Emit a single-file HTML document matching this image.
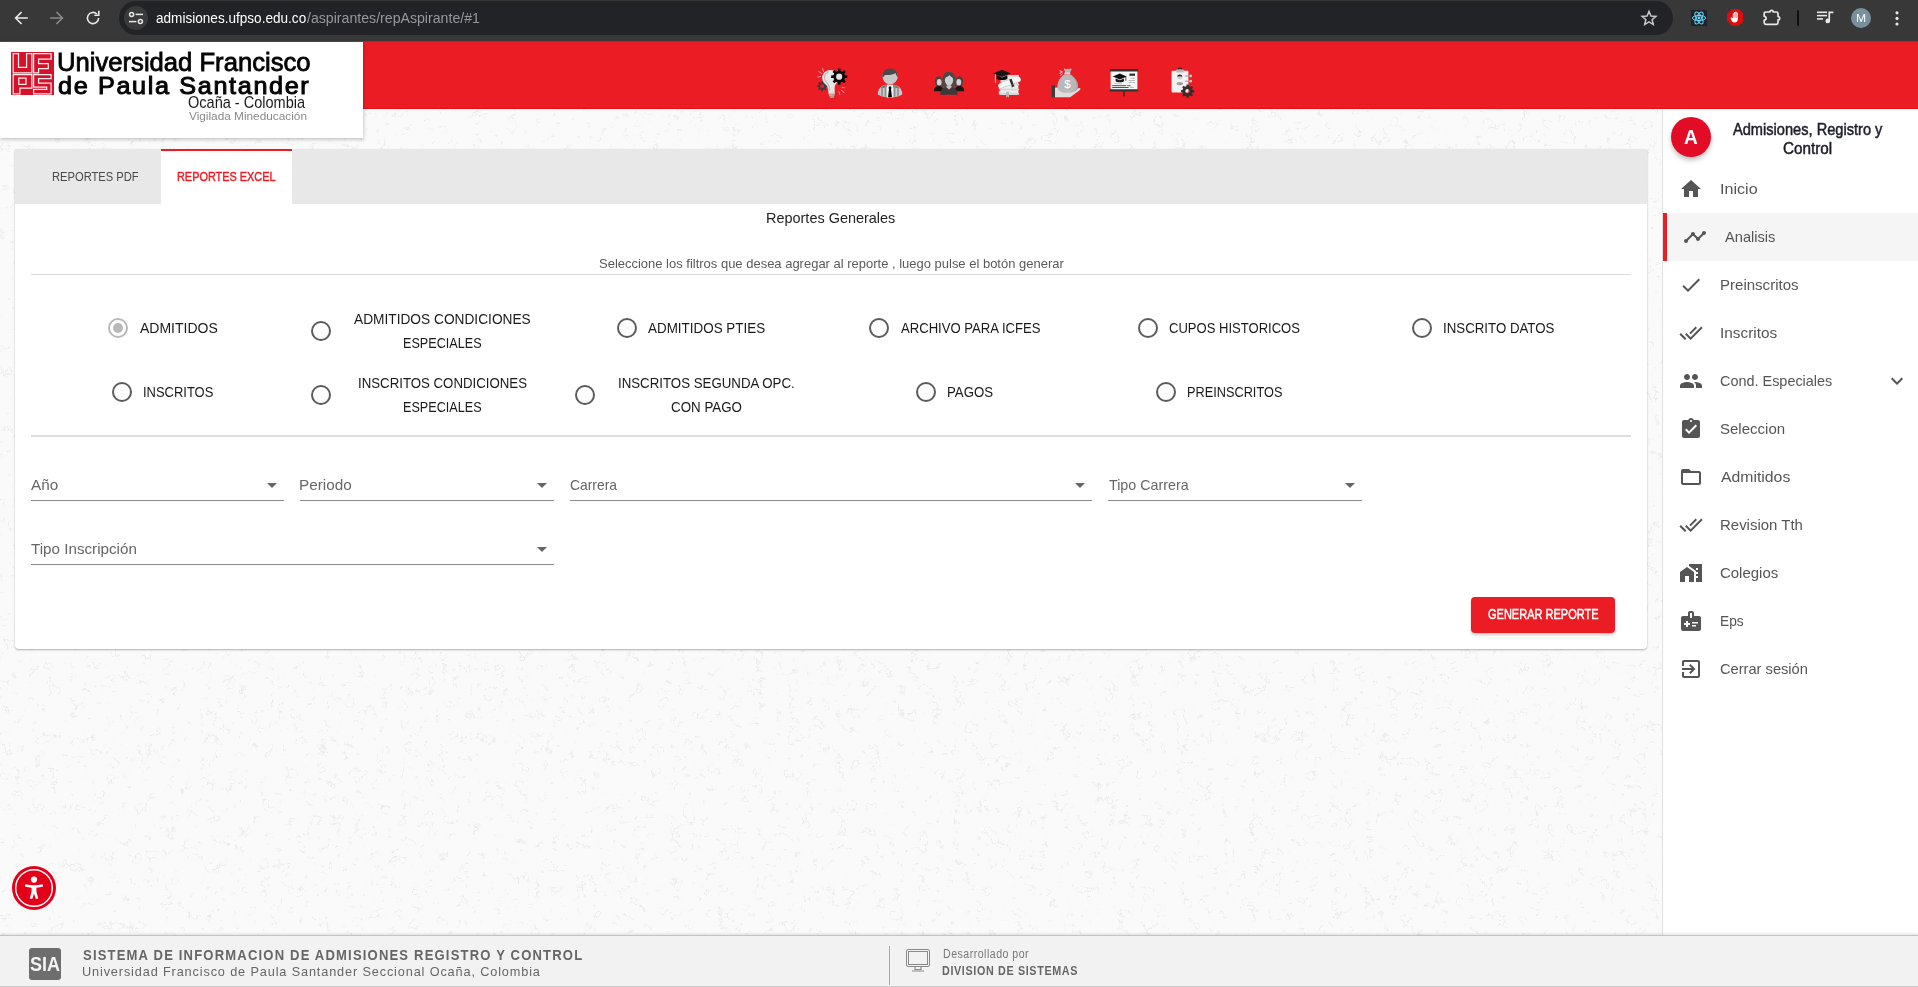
<!DOCTYPE html>
<html lang="es">
<head>
<meta charset="utf-8">
<title>Admisiones UFPSO - Reportes</title>
<style>
*{box-sizing:border-box;margin:0;padding:0}
html,body{width:1918px;height:987px;overflow:hidden}
body{position:relative;background:#fafafa;font-family:"Liberation Sans",sans-serif;color:#222}
.abs{position:absolute}
.t{position:absolute;white-space:nowrap;line-height:1;transform-origin:0 50%}
/* ---------- browser chrome ---------- */
#chrome{position:absolute;left:0;top:0;width:1918px;height:42px;background:#383838;border-bottom:1px solid #4c5150}
#omni{position:absolute;left:119px;top:1px;width:1554px;height:34px;border-radius:17px;background:#222326}
#omni .site{position:absolute;left:5px;top:5px;width:24px;height:24px;border-radius:12px;background:#3a3a3a}
/* ---------- page header ---------- */
#redbar{position:absolute;left:0;top:42px;width:1918px;height:67px;background:#ec1c24;border-bottom:1px solid #e80d14}
#logobox{position:absolute;left:0;top:42px;width:363px;height:96px;background:#fff;box-shadow:0 1px 4px rgba(0,0,0,.28)}
/* ---------- sidebar ---------- */
#side{position:absolute;left:1662px;top:109px;width:256px;height:826px;background:#fff;border-left:1px solid #e0e0e0}
#avatar{position:absolute;left:8px;top:8px;width:40px;height:40px;border-radius:50%;background:#e30c26;box-shadow:0 3px 5px rgba(0,0,0,.25)}
.nav{position:absolute;left:0;width:255px;height:48px}
.nav.act{background:#f5f5f5;border-left:4px solid #ec1c24}
.nav svg{position:absolute;top:12px;width:24px;height:24px;fill:#555}
/* ---------- card ---------- */
#card{position:absolute;left:15px;top:149px;width:1632px;height:500px;background:#fff;border-radius:0 0 4px 4px;box-shadow:0 1px 2px rgba(0,0,0,.3)}
#tabs{position:absolute;left:0;top:0;width:1632px;height:55px;background:#e8e8e8}
#tabact{position:absolute;left:146px;top:0;width:131px;height:55px;background:#fff;border-top:2px solid #ec1c24}
.hr{position:absolute;left:16px;width:1600px;height:1px;background:#dadada}
.radio{position:absolute;width:20px;height:20px;border-radius:50%;border:2px solid #5c5c5c;background:#fff}
.radio.on{border-color:#b8b8b8}
.radio.on:after{content:"";position:absolute;left:3px;top:3px;width:10px;height:10px;border-radius:50%;background:#b8b8b8}
.sel{position:absolute;height:34px;border-bottom:1px solid #8c8c8c}
.sel i{position:absolute;right:7px;top:16px;width:0;height:0;border-left:5px solid transparent;border-right:5px solid transparent;border-top:5px solid #666}
#btn{position:absolute;left:1456px;top:448px;width:144px;height:36px;border-radius:4px;background:#ec1c24;box-shadow:0 2px 3px rgba(0,0,0,.22)}
/* ---------- accessibility fab ---------- */
#a11y{position:absolute;left:12px;top:866px;width:44px;height:44px;border-radius:50%;background:#e2001a}
/* ---------- footer ---------- */
#foot{position:absolute;left:0;top:935px;width:1918px;height:52px;background:#f2f2f2;border-top:1px solid #c4c4c4;border-bottom:1px solid #cdcdcd;box-shadow:0 -1px 3px rgba(0,0,0,.12)}
</style>
</head>
<body>

<!-- ================= BACKGROUND TEXTURE ================= -->
<svg id="texture" class="abs" style="left:0;top:109px" width="1662" height="826"><filter id="tx" x="0" y="0" width="100%" height="100%" color-interpolation-filters="sRGB"><feTurbulence type="fractalNoise" baseFrequency=".085" numOctaves="4" seed="5" result="n"/><feColorMatrix in="n" values="0 0 0 0 0  0 0 0 0 0  0 0 0 0 0  1 0 0 0 0"/><feComponentTransfer result="veins"><feFuncA type="table" tableValues="0 0 0 0 0 0 0 0 0 0 0 0 .15 .9 .15 0 0 0 0 0 0 0 0 0 0 0 0 0 0 0 0 0 0"/></feComponentTransfer><feColorMatrix in="n" values="0 0 0 0 0  0 0 0 0 0  0 0 0 0 0  0 1 0 0 0"/><feComponentTransfer result="mask"><feFuncA type="table" tableValues="0 0 0 0 0 0 0 0 0 0 .5 1 1 1 1 1 1 1 1 1"/></feComponentTransfer><feComposite in="veins" in2="mask" operator="in"/></filter><rect width="1662" height="826" filter="url(#tx)" opacity=".07"/></svg>

<!-- ================= BROWSER CHROME ================= -->
<div id="chrome">
<div id="omni"><div class="site"></div></div>
<svg class="abs" style="left:13px;top:10px" width="16" height="16" viewBox="0 0 16 16" fill="none" stroke="#e8e8e8" stroke-width="1.6" stroke-linecap="square"><path d="M14 8H3M8 2.6L2.6 8 8 13.4"/></svg>
<svg class="abs" style="left:49px;top:10px" width="16" height="16" viewBox="0 0 16 16" fill="none" stroke="#8b8b8b" stroke-width="1.6" stroke-linecap="square"><path d="M2 8h11M8 2.6L13.4 8 8 13.4"/></svg>
<svg class="abs" style="left:85px;top:10px" width="16" height="16" viewBox="0 0 16 16" fill="none" stroke="#e8e8e8" stroke-width="1.6"><path d="M13.6 8a5.6 5.6 0 1 1-1.7-4"/><path d="M13.8 1.6v3.6h-3.6" stroke-linecap="square"/></svg>
<svg class="abs" style="left:128px;top:10px" width="16" height="16" viewBox="0 0 16 16" fill="none" stroke="#e8e8e8" stroke-width="1.5"><circle cx="3.6" cy="4.4" r="2"/><path d="M7.6 4.4H15"/><circle cx="12.4" cy="11.6" r="2"/><path d="M1 11.6h7.4"/></svg>
<span class="t" style="left:156.40px;top:11.00px;font-size:14.00px;color:#ffffff;transform:scaleX(0.9698);">admisiones.ufpso.edu.co</span>
<span class="t" style="left:307.40px;top:11.00px;font-size:14.00px;color:#94989d;transform:scaleX(1.0098);">/aspirantes/repAspirante/#1</span>
<svg class="abs" style="left:1640px;top:9px" width="18" height="18" viewBox="0 0 24 24" fill="none" stroke="#c7c7c7" stroke-width="2" stroke-linejoin="miter"><path d="M12 3.2l2.6 6.1 6.6.6-5 4.3 1.5 6.5L12 17.2l-5.7 3.5 1.5-6.5-5-4.3 6.6-.6z"/></svg>
<svg class="abs" style="left:1691px;top:10px" width="16" height="16" viewBox="0 0 16 16"><rect width="16" height="16" fill="#20232a"/><g fill="none" stroke="#61dafb" stroke-width="1"><ellipse cx="8" cy="8" rx="6.6" ry="2.6"/><ellipse cx="8" cy="8" rx="6.6" ry="2.6" transform="rotate(60 8 8)"/><ellipse cx="8" cy="8" rx="6.6" ry="2.6" transform="rotate(120 8 8)"/></g><circle cx="8" cy="8" r="1.4" fill="#61dafb"/></svg>
<svg class="abs" style="left:1726.600px;top:9.400px" width="16.800" height="16.800" viewBox="0 0 18 18"><path d="M5.300 0h7.400L18 5.300v7.400L12.700 18H5.300L0 12.700V5.300z" fill="#e00c0c"/><path d="M6.200 10V5.400c0-1 1.300-1 1.300 0V3.900c0-1 1.400-1 1.400 0v-.5c0-1 1.400-1 1.400 0V4.400c0-1 1.300-1 1.300 0v6.400c0 2.300-1.200 3.800-3.300 3.800-1.700 0-2.600-.8-3.400-2.300L4 10.200c-.5-1 .8-1.600 1.400-.7z" fill="#fff"/><g stroke="#e00c0c" stroke-width=".45"><path d="M7.500 5.400v4M8.900 4v5.400M10.300 4.400v5"/></g></svg>
<svg class="abs" style="left:1762px;top:8px" width="20" height="18" viewBox="0 0 20 18" fill="none" stroke="#e8e8e8" stroke-width="1.700" stroke-linejoin="round"><path d="M3.800 4H7.900a1.700 1.700 0 0 1 3.400 0H14.400a1.600 1.600 0 0 1 1.600 1.600V8.500a1.700 1.700 0 0 1 0 3.400V14.800a1.600 1.600 0 0 1-1.600 1.600H3.800a1.600 1.600 0 0 1-1.600-1.600V12.100a1.900 1.900 0 0 0 0-3.800V5.600a1.600 1.600 0 0 1 1.600-1.600Z"/></svg>
<div class="abs" style="left:1797px;top:10px;width:2px;height:16px;background:#101010;border-radius:1px"></div>
<svg class="abs" style="left:1817px;top:11px" width="17" height="13" viewBox="0 0 17 13" fill="#e8e8e8"><rect x="0" y="0.500" width="10" height="1.600"/><rect x="0" y="3.800" width="10" height="1.600"/><rect x="0" y="7.100" width="6" height="1.600"/><path d="M11.400.5h5v1.800h-3.300v7.600a2.300 2.300 0 1 1-1.700-2.200z"/></svg>
<div class="abs" style="left:1851px;top:8px;width:20px;height:20px;border-radius:50%;background:#78909c"></div>
<span class="t" style="left:1856.30px;top:13.00px;font-size:11.34px;color:#ffffff;transform:scaleX(1.0778);">M</span>
<svg class="abs" style="left:1895px;top:11px" width="4" height="15" viewBox="0 0 4 15" fill="#e8e8e8"><circle cx="2" cy="1.800" r="1.600"/><circle cx="2" cy="7.400" r="1.600"/><circle cx="2" cy="13" r="1.600"/></svg>
</div>

<!-- ================= HEADER ================= -->
<div id="redbar">
<svg class="abs" style="left:816px;top:25px" width="32" height="32" viewBox="0 0 32 32"><g stroke="#c9a9aa" stroke-width="1.100" stroke-linecap="round" opacity=".8"><path d="M2.600 4.400l3 2M6.600 1.600l1 3M1.600 10l3.200-.6M26.200 20.400l2.600.3M25.600 23.400l2.400 2.200M23 24.600l.8 3"/></g><path fill-rule="evenodd" fill="#3a3a3a" d="M11.39 18.29L11.39 19.91L9.85 19.96L9.40 21.03L10.46 22.16L9.31 23.31L8.18 22.25L7.11 22.70L7.06 24.24L5.44 24.24L5.39 22.70L4.32 22.25L3.19 23.31L2.04 22.16L3.10 21.03L2.65 19.96L1.11 19.91L1.11 18.29L2.65 18.24L3.10 17.17L2.04 16.04L3.19 14.89L4.32 15.95L5.39 15.50L5.44 13.96L7.06 13.96L7.11 15.50L8.18 15.95L9.31 14.89L10.46 16.04L9.40 17.17L9.85 18.24ZM4.35 19.10a1.90 1.90 0 1 0 3.80 0a1.90 1.90 0 1 0 -3.80 0Z"/><g transform="translate(-.6 .3) rotate(-5 15 16)"><path d="M15.400 2.600c-4.700 0-8.100 3.500-8.100 7.800 0 3.200 1.800 5.100 3.300 7 .9 1.200 1.400 2.400 1.500 4.400l.2 4.400h6.200l.2-4.400c.1-2 .6-3.200 1.500-4.400 1.500-1.900 3.300-3.800 3.300-7 0-4.300-3.400-7.800-8.100-7.800z" fill="#e6e6e6"/><path d="M13.600 4.600c-3 1.300-4.600 4.400-3.600 7.700.7 2.400 2.600 3.700 3.300 6.200.4 1.400.5 3 .5 5" fill="none" stroke="#b9b9b9" stroke-width="1.100"/><rect x="12.400" y="25.600" width="6" height="1.700" fill="#c9cccc"/><rect x="12.600" y="27.300" width="5.600" height="1.600" fill="#b3b8b8"/><path d="M13 28.900h4.800l-.9 1.800h-3z" fill="#a8adad"/></g><circle cx="23.20" cy="9.70" r="3.40" fill="#e2e2e2"/><path fill-rule="evenodd" fill="#080808" d="M31.30 8.42L31.30 10.98L28.94 11.08L28.23 12.78L29.83 14.52L28.02 16.33L26.28 14.73L24.58 15.44L24.48 17.80L21.92 17.80L21.82 15.44L20.12 14.73L18.38 16.33L16.57 14.52L18.17 12.78L17.46 11.08L15.10 10.98L15.10 8.42L17.46 8.32L18.17 6.62L16.57 4.88L18.38 3.07L20.12 4.67L21.82 3.96L21.92 1.60L24.48 1.60L24.58 3.96L26.28 4.67L28.02 3.07L29.83 4.88L28.23 6.62L28.94 8.32ZM20.10 9.70a3.10 3.10 0 1 0 6.20 0a3.10 3.10 0 1 0 -6.20 0Z"/></svg>
<svg class="abs" style="left:874px;top:25px" width="32" height="32" viewBox="0 0 32 32"><path d="M3.800 27.200c0-5 3.400-8.700 8.200-9.400h8c4.800.7 8.200 4.400 8.200 9.400-2.200 1.900-7 3.300-12.200 3.300S6 29.100 3.800 27.200z" fill="#c9c9c9"/><path d="M6.400 21.200c1.600-1.800 3.600-3 5.800-3.400l1.400.2-1 2.400zM25.600 21.200c-1.600-1.800-3.600-3-5.800-3.400l-1.400.2 1 2.400z" fill="#6f6f6f"/><g fill="#8d8d8d"><path d="M7.200 20.200l1.600-1v10l-1.600-.6z"/><path d="M10.600 18.400l1.500-.4v12l-1.500-.2z"/><path d="M19.900 18l1.500.4v11.400l-1.500.2z"/><path d="M23.200 19.200l1.600 1v8.400l-1.600.6z"/></g><path d="M12.800 17.800h6.400l-.4 12.600c-1.800.2-3.800.2-5.600 0z" fill="#f4f4f4"/><path d="M15 19.500h2l.5 1.600-.5 1 1 8.200c-1.300.2-2.700.2-4 0l1-8.200-.5-1z" fill="#0a0a0a"/><circle cx="16.100" cy="9.600" r="7.700" fill="#c8c8c8"/><path d="M8.400 10.400C8 4.600 11.500 1.400 16.100 1.400s8.100 3.200 7.700 9c-1.200-1.600-2-2.900-2.400-4.400-2.400 1.800-7.200 2.500-10.600 1.900-.5 1.200-1.300 1.800-2.400 2.500z" fill="#4b4b4b"/></svg>
<svg class="abs" style="left:933px;top:25px" width="32" height="32" viewBox="0 0 32 32"><g transform="translate(0 -1.300)"><ellipse cx="5.6" cy="15.800" rx="3.700" ry="5.200" fill="#454545"/><ellipse cx="6.2" cy="16.600" rx="2.400" ry="3.300" fill="#d2d2d2"/><path d="M0.8 25.500c0-3.400 1.800-5.200 4.800-5.200s4.800 1.800 4.800 5.200z" fill="#161616"/><ellipse cx="26.4" cy="15.800" rx="3.700" ry="5.200" fill="#454545"/><ellipse cx="25.8" cy="16.600" rx="2.400" ry="3.300" fill="#d2d2d2"/><path d="M21.6 25.500c0-3.400 1.800-5.200 4.800-5.200s4.800 1.800 4.800 5.200z" fill="#161616"/><path d="M9.400 14.800c0-5.600 2.600-8.800 6.600-8.800s6.600 3.200 6.600 8.800c0 3.800 1.200 6.200 1.200 6.200H8.200s1.200-2.400 1.200-6.200z" fill="#4a4a4a"/><ellipse cx="16" cy="14.600" rx="4.100" ry="5.400" fill="#cfcfcf"/><path d="M11.800 11.800c1.700-.2 3.600-1.200 4.600-2.600 1 1.400 2.400 2.300 3.900 2.600-.2-3-1.700-4.600-4.300-4.600s-4 1.600-4.200 4.600z" fill="#4a4a4a"/><path d="M7.200 29c0-4.800 2.800-7.200 6-7.800l2.800 2.600 2.800-2.600c3.200.6 6 3 6 7.800z" fill="#3a3a3a"/><path d="M13.200 21.200l2.800 2.600 2.800-2.600-1-1.700h-3.600z" fill="#c4c4c4"/></g></svg>
<svg class="abs" style="left:991px;top:25px" width="32" height="32" viewBox="0 0 32 32"><path d="M9.600 8h17.400c1.500 0 1.500 2 0 2v2c1.500 0 1.500 2 0 2v2.600c1.700 0 1.700 2 0 2v3c1.700 0 1.700 2 0 2v2.200c1.700 0 1.700 2.100 0 2.100H9.600c-2.600 0-2.600-4.300 0-4.300v-.7c-2.600 0-2.600-4.300 0-4.300v-.6z" fill="#d6d9d9"/><path d="M10 18.600h17.400v3H10c-1.500 0-1.500-3 0-3zM10 23.600h17.400v2.200H10c-1.300 0-1.300-2.200 0-2.200zM16 10h11v2H16zM16 14h11v2.600H16z" fill="#eef0f0"/><g transform="rotate(-20 18.500 15.700)"><rect x="6.800" y="13.800" width="23.400" height="4.600" rx="2.300" fill="#c9cccc"/><rect x="6.800" y="13" width="23.400" height="4.600" rx="2.300" fill="#f5f5f5"/><rect x="19.400" y="12.600" width="2.400" height="5.600" fill="#2b2b2b"/><path d="M19.600 18.200l-.6 3 1.500-.8 1.500.8-.4-3z" fill="#2b2b2b"/></g><path d="M15.200 24.800h2.800v6l-1.400-1.400-1.400 1.400z" fill="#b4b8b8"/><path d="M5.600 8.200v3.600c1.600 1.700 9.200 1.700 10.800 0V8.200L11 10.400z" fill="#0c0c0c"/><path d="M2 6.400L11 2.800l9 3.600-9 3.600z" fill="#161616"/><path d="M4.400 7.400v8.400" stroke="#d8d8d8" stroke-width=".9"/></svg>
<svg class="abs" style="left:1050px;top:25px" width="32" height="32" viewBox="0 0 32 32"><rect x="1.600" y="18.200" width="3.400" height="12.400" rx=".8" fill="#3c3c3c"/><path d="M5 20.800c3.400-1.400 6.600-.4 9.800 1h5.400c1.400 0 1.400 2.200 0 2.200h-4l8.200-.4 4.300-2.500c1.500-.8 2.600.8 1.300 1.800l-8.800 6.500c-1 .7-1.800.9-3 .9H5z" fill="#dedede"/><path d="M9.600 6.400l2.800-1.200M9.800 3.800l2.800.900M10 8.800l2.600-2.200" stroke="#e3e3e3" stroke-width=".9" fill="none"/><path d="M13.800 1.800c1-.6 1.800-.1 2.600.4.800-.6 1.800-.6 2.600 0 .8-.5 1.700-.9 2.700-.2l-1.700 4h-4.600z" fill="#b4b4b4"/><rect x="14.200" y="5.600" width="6.200" height="1.600" rx=".6" fill="#d9d9d9"/><path d="M14.600 7.200h5.400c4 2.400 8 7.200 8 11.800 0 4.600-4 6.800-10.700 6.800S7.500 23.600 7.500 19c0-4.600 3.100-9.400 7.100-11.800z" fill="#b9b9b9"/><path d="M19.400 7.200c3.600 2.400 7.200 7.200 7.200 11.800 0 3.200-1.800 5.200-5 6.200 4.400-.8 6.400-2.900 6.400-6.200 0-4.600-4-9.400-8-11.800z" fill="#a2a2a2"/><path d="M14.400 24h6" stroke="#c6c6c6" stroke-width=".8"/><text x="17.400" y="20.800" font-family="Liberation Sans, sans-serif" font-size="11.500" text-anchor="middle" fill="#fff">$</text></svg>
<svg class="abs" style="left:1108px;top:25px" width="32" height="32" viewBox="0 0 32 32"><rect x="15.300" y="24" width="1.400" height="5.400" fill="#3a2326"/><rect x="2.600" y="3.200" width="26.800" height="20" fill="#f7f7f7"/><rect x="1.800" y="2" width="28.400" height="2.400" rx=".6" fill="#323232"/><rect x="1.800" y="22.200" width="28.400" height="2.200" rx=".6" fill="#323232"/><path d="M4.800 9.600l7-3 7 3-7 3z" fill="#111"/><path d="M7.600 11.400v2.800c1 1.300 7.400 1.300 8.400 0v-2.800l-4.200 1.800z" fill="#1b1b1b"/><path d="M17.800 9.800v4" stroke="#222" stroke-width=".8"/><rect x="21.400" y="6.600" width="5.600" height="2.200" fill="#2e2e2e"/><g fill="#bdbdbd"><rect x="22.600" y="10.800" width="4.400" height="1"/><rect x="20.600" y="13" width="6.400" height="1"/><rect x="20.600" y="15" width="6.400" height="1"/><rect x="6.600" y="16.200" width="7.600" height="1"/><rect x="21.800" y="20" width="4.200" height="1"/></g><g fill="#555"><rect x="4.200" y="18.200" width="14" height="1"/><rect x="19.200" y="18.200" width="3.400" height="1"/><rect x="4.200" y="20" width="16.400" height="1"/></g></svg>
<svg class="abs" style="left:1167px;top:25px" width="32" height="32" viewBox="0 0 32 32"><path d="M11 3c0-2.600 4-2.600 4 0" fill="none" stroke="#2d2d2d" stroke-width="1.200"/><rect x="4.600" y="3.800" width="16.800" height="21.600" rx="1" fill="#f1f1f1"/><rect x="9.200" y="2.600" width="7.600" height="2.800" rx=".6" fill="#b9b9b9"/><circle cx="12.800" cy="10" r="2.500" fill="#d0d0d0"/><path d="M10.300 9.800c0-3.200 5-3.200 5 0-1.200-.9-3.800-.9-5 0z" fill="#2f2f2f"/><ellipse cx="12.800" cy="16.600" rx="3.300" ry="1.700" fill="#9e9e9e"/><g stroke="#8f8f8f" stroke-width=".9"><path d="M18 9h4.200M18 14.200h4.200"/></g><circle cx="23.600" cy="9" r="1.400" fill="#c9c9c9"/><circle cx="23.600" cy="14.200" r="1.400" fill="#c9c9c9"/><path fill-rule="evenodd" fill="#2f2f2f" d="M27.22 23.15L27.22 25.25L25.66 25.41L25.03 26.92L26.02 28.14L24.54 29.62L23.32 28.63L21.81 29.26L21.65 30.82L19.55 30.82L19.39 29.26L17.88 28.63L16.66 29.62L15.18 28.14L16.17 26.92L15.54 25.41L13.98 25.25L13.98 23.15L15.54 22.99L16.17 21.48L15.18 20.26L16.66 18.78L17.88 19.77L19.39 19.14L19.55 17.58L21.65 17.58L21.81 19.14L23.32 19.77L24.54 18.78L26.02 20.26L25.03 21.48L25.66 22.99ZM18.30 24.20a2.30 2.30 0 1 0 4.60 0a2.30 2.30 0 1 0 -4.60 0Z"/></svg>
</div>
<div id="logobox">
<svg class="abs" style="left:10.85px;top:9.7px" width="43.2" height="43.2" viewBox="0 0 43.2 43.2"><rect width="43.2" height="43.2" fill="#d6112a"/><g fill="none" stroke="#fff" stroke-opacity=".92" stroke-width="1.250"><path d="M2.200 1.600H7.500V15.300H15.600V1.600H20.900V20.900H2.200Z"/><path d="M22.600 1.600H40.100V7.200H27.600V11.700H37.300V16.700H27.600V20.900H22.600Z"/><path d="M2.200 22.600H20.900V36.200H8.900V41.800H2.200ZM7.800 26.200H15V32.300H7.800Z"/><path d="M22.600 22.600H40.100V26.700H27.600V31.200H40.100V41.800H22.600V37.300H35.700V35.100H22.600Z"/></g></svg>
<span class="t" style="left:57.39px;top:8.00px;font-size:25.44px;color:#050505;transform:scaleX(1.0076);-webkit-text-stroke:.8px #050505;">Universidad Francisco</span>
<span class="t" style="left:57.57px;top:32.00px;font-size:24.42px;color:#050505;letter-spacing:1.60px;transform:scaleX(1.0321);-webkit-text-stroke:1px #050505;">de Paula Santander</span>
<span class="t" style="left:188.40px;top:53.00px;font-size:15.99px;color:#1b1b1b;transform:scaleX(0.9090);">Ocaña - Colombia</span>
<span class="t" style="left:188.80px;top:68.00px;font-size:11.63px;color:#8a8a8a;transform:scaleX(1.0160);">Vigilada Mineducación</span>
</div>

<!-- ================= MAIN CARD ================= -->
<div id="card">
<div id="tabs"><div id="tabact"></div></div>
<span class="t" style="left:37.38px;top:21.00px;font-size:13.66px;color:#4a4a4a;transform:scaleX(0.8180);">REPORTES PDF</span>
<span class="t" style="left:161.70px;top:21.00px;font-size:13.66px;color:#ec1c24;transform:scaleX(0.7985);-webkit-text-stroke:.45px #ec1c24;">REPORTES EXCEL</span>
<span class="t" style="left:750.64px;top:61.00px;font-size:15.12px;color:#222;transform:scaleX(0.9565);">Reportes Generales</span>
<span class="t" style="left:583.80px;top:108.00px;font-size:13.37px;color:#5a5a5a;transform:scaleX(0.9717);">Seleccione los filtros que desea agregar al reporte , luego pulse el botón generar</span>
<div class="hr" style="top:125px"></div>
<div class="hr" style="top:286px;height:2px;background:#dddddd"></div>
<span class="radio on" style="left:93.0px;top:169.0px"></span>
<span class="t" style="left:124.60px;top:171.00px;font-size:15.26px;color:#1a1a1a;transform:scaleX(0.9178);">ADMITIDOS</span>
<span class="radio" style="left:296.0px;top:172.0px"></span>
<span class="t" style="left:339.40px;top:162.00px;font-size:15.26px;color:#1a1a1a;transform:scaleX(0.8992);">ADMITIDOS CONDICIONES</span>
<span class="t" style="left:387.77px;top:186.00px;font-size:15.26px;color:#1a1a1a;transform:scaleX(0.8276);">ESPECIALES</span>
<span class="radio" style="left:601.5px;top:169.0px"></span>
<span class="t" style="left:633.00px;top:171.00px;font-size:15.26px;color:#1a1a1a;transform:scaleX(0.8807);">ADMITIDOS PTIES</span>
<span class="radio" style="left:854.0px;top:169.0px"></span>
<span class="t" style="left:885.60px;top:171.00px;font-size:15.26px;color:#1a1a1a;transform:scaleX(0.8590);">ARCHIVO PARA ICFES</span>
<span class="radio" style="left:1122.6px;top:169.0px"></span>
<span class="t" style="left:1154.20px;top:171.00px;font-size:15.26px;color:#1a1a1a;transform:scaleX(0.8554);">CUPOS HISTORICOS</span>
<span class="radio" style="left:1397.0px;top:169.0px"></span>
<span class="t" style="left:1427.73px;top:171.00px;font-size:15.26px;color:#1a1a1a;transform:scaleX(0.8708);">INSCRITO DATOS</span>
<span class="radio" style="left:96.5px;top:233.0px"></span>
<span class="t" style="left:128.15px;top:235.00px;font-size:15.26px;color:#1a1a1a;transform:scaleX(0.8494);">INSCRITOS</span>
<span class="radio" style="left:296.0px;top:236.0px"></span>
<span class="t" style="left:342.73px;top:226.00px;font-size:15.26px;color:#1a1a1a;transform:scaleX(0.8685);">INSCRITOS CONDICIONES</span>
<span class="t" style="left:387.77px;top:250.00px;font-size:15.26px;color:#1a1a1a;transform:scaleX(0.8276);">ESPECIALES</span>
<span class="radio" style="left:559.5px;top:236.0px"></span>
<span class="t" style="left:603.13px;top:226.00px;font-size:15.26px;color:#1a1a1a;transform:scaleX(0.8701);">INSCRITOS SEGUNDA OPC.</span>
<span class="t" style="left:656.00px;top:250.00px;font-size:15.26px;color:#1a1a1a;transform:scaleX(0.8756);">CON PAGO</span>
<span class="radio" style="left:901.0px;top:233.0px"></span>
<span class="t" style="left:932.13px;top:235.00px;font-size:15.26px;color:#1a1a1a;transform:scaleX(0.8684);">PAGOS</span>
<span class="radio" style="left:1140.8px;top:233.0px"></span>
<span class="t" style="left:1171.56px;top:235.00px;font-size:15.26px;color:#1a1a1a;transform:scaleX(0.8358);">PREINSCRITOS</span>
<div class="sel" style="left:16.0px;top:318.0px;width:253.3px"><i></i></div>
<span class="t" style="left:16.20px;top:328.00px;font-size:15.12px;color:#666;transform:scaleX(1.0120);">Año</span>
<div class="sel" style="left:285.3px;top:318.0px;width:253.4px"><i></i></div>
<span class="t" style="left:284.49px;top:328.00px;font-size:15.12px;color:#666;transform:scaleX(1.0123);">Periodo</span>
<div class="sel" style="left:554.7px;top:318.0px;width:522.6px"><i></i></div>
<span class="t" style="left:554.90px;top:328.00px;font-size:15.12px;color:#666;transform:scaleX(0.9187);">Carrera</span>
<div class="sel" style="left:1093.3px;top:318.0px;width:253.4px"><i></i></div>
<span class="t" style="left:1093.50px;top:328.00px;font-size:15.12px;color:#666;transform:scaleX(0.9453);">Tipo Carrera</span>
<div class="sel" style="left:16.0px;top:382.0px;width:522.7px"><i></i></div>
<span class="t" style="left:16.20px;top:392.00px;font-size:15.12px;color:#666;transform:scaleX(1.0062);">Tipo Inscripción</span>
<div id="btn"></div>
<span class="t" style="left:1473.00px;top:459.00px;font-size:13.95px;color:#fff;transform:scaleX(0.7900);-webkit-text-stroke:.45px #fff;">GENERAR REPORTE</span>
</div>

<!-- ================= SIDEBAR ================= -->
<div id="side">
<div id="avatar"></div>
<span class="t" style="left:20.90px;top:17.00px;font-size:21.08px;font-weight:700;color:#fff;transform:scaleX(0.9067);">A</span>
<span class="t" style="left:70.00px;top:13.00px;font-size:15.84px;color:#1f1f2b;transform:scaleX(0.9231);-webkit-text-stroke:.5px #1f1f2b;">Admisiones, Registro y</span>
<span class="t" style="left:119.80px;top:32.00px;font-size:15.84px;color:#1f1f2b;transform:scaleX(0.9642);-webkit-text-stroke:.5px #1f1f2b;">Control</span>
<div class="nav" style="top:56px"><svg viewBox="0 0 24 24" style="left:16px"><path d="M10 20v-6h4v6h5v-8h3L12 3 2 12h3v8z"/></svg></div>
<span class="t" style="left:57.36px;top:72.00px;font-size:15.55px;color:#555;transform:scaleX(1.0362);">Inicio</span>
<div class="nav act" style="top:104px"><svg viewBox="0 0 24 24" style="left:16px"><path d="M23 8c0 1.100-.900 2-2 2-.180 0-.350-.020-.510-.070l-3.560 3.550c.050.160.070.340.070.520 0 1.100-.900 2-2 2s-2-.900-2-2c0-.180.020-.360.070-.520l-2.550-2.550c-.160.050-.340.070-.520.070s-.360-.020-.520-.070l-4.550 4.560c.050.160.070.330.070.510 0 1.100-.900 2-2 2s-2-.900-2-2 .900-2 2-2c.180 0 .350.020.510.070l4.560-4.550C8.020 9.360 8 9.180 8 9c0-1.100.900-2 2-2s2 .900 2 2c0 .180-.020.360-.070.520l2.550 2.550c.160-.050.340-.070.520-.070s.360.020.520.070l3.550-3.560C19.020 8.350 19 8.180 19 8c0-1.100.900-2 2-2s2 .900 2 2z"/></svg></div>
<span class="t" style="left:62.00px;top:120.00px;font-size:15.55px;color:#555;transform:scaleX(0.9406);">Analisis</span>
<div class="nav" style="top:152px"><svg viewBox="0 0 24 24" style="left:16px"><path d="M9 16.170L4.830 12l-1.420 1.410L9 19 21 7l-1.410-1.410z"/></svg></div>
<span class="t" style="left:56.63px;top:168.00px;font-size:15.55px;color:#555;transform:scaleX(0.9672);">Preinscritos</span>
<div class="nav" style="top:200px"><svg viewBox="0 0 24 24" style="left:16px"><path d="M18 7l-1.410-1.410-6.340 6.340 1.410 1.410L18 7zm4.240-1.410L11.660 16.170 7.480 12l-1.410 1.410L11.660 19l12-12-1.420-1.410zM.410 13.410L6 19l1.410-1.410L1.830 12 .410 13.410z"/></svg></div>
<span class="t" style="left:56.61px;top:216.00px;font-size:15.55px;color:#555;transform:scaleX(0.9876);">Inscritos</span>
<div class="nav" style="top:248px"><svg viewBox="0 0 24 24" style="left:16px"><path d="M16 11c1.660 0 2.990-1.340 2.990-3S17.660 5 16 5c-1.660 0-3 1.340-3 3s1.340 3 3 3zm-8 0c1.660 0 2.990-1.340 2.990-3S9.660 5 8 5C6.340 5 5 6.340 5 8s1.340 3 3 3zm0 2c-2.330 0-7 1.170-7 3.500V19h14v-2.500c0-2.330-4.670-3.500-7-3.500zm8 0c-.290 0-.620.020-.970.050 1.160.840 1.970 1.970 1.970 3.450V19h6v-2.500c0-2.330-4.670-3.500-7-3.500z"/></svg><svg viewBox="0 0 24 24" style="left:222px"><path d="M16.590 8.590L12 13.170 7.410 8.590 6 10l6 6 6-6z"/></svg></div>
<span class="t" style="left:57.10px;top:264.00px;font-size:15.55px;color:#555;transform:scaleX(0.9281);">Cond. Especiales</span>
<div class="nav" style="top:296px"><svg viewBox="0 0 24 24" style="left:16px"><path d="M19 3h-4.180C14.400 1.840 13.300 1 12 1c-1.300 0-2.400.840-2.820 2H5c-1.100 0-2 .900-2 2v14c0 1.100.900 2 2 2h14c1.100 0 2-.900 2-2V5c0-1.100-.900-2-2-2zm-7 0c.550 0 1 .450 1 1s-.450 1-1 1-1-.450-1-1 .450-1 1-1zm-2 14l-4-4 1.410-1.410L10 14.170l6.590-6.590L18 9l-8 8z"/></svg></div>
<span class="t" style="left:57.10px;top:312.00px;font-size:15.55px;color:#555;transform:scaleX(0.9661);">Seleccion</span>
<div class="nav" style="top:344px"><svg viewBox="0 0 24 24" style="left:16px"><path d="M20 6h-8l-2-2H4c-1.100 0-1.990.900-1.990 2L2 18c0 1.100.900 2 2 2h16c1.100 0 2-.900 2-2V8c0-1.100-.900-2-2-2zm0 12H4V8h16v10z"/></svg></div>
<span class="t" style="left:57.60px;top:360.00px;font-size:15.55px;color:#555;transform:scaleX(1.0148);">Admitidos</span>
<div class="nav" style="top:392px"><svg viewBox="0 0 24 24" style="left:16px"><path d="M18 7l-1.410-1.410-6.340 6.340 1.410 1.410L18 7zm4.240-1.410L11.660 16.170 7.480 12l-1.410 1.410L11.660 19l12-12-1.420-1.410zM.410 13.410L6 19l1.410-1.410L1.830 12 .410 13.410z"/></svg></div>
<span class="t" style="left:56.64px;top:408.00px;font-size:15.55px;color:#555;transform:scaleX(0.9627);">Revision Tth</span>
<div class="nav" style="top:440px"><svg viewBox="0 0 24 24" style="left:16px"><path d="M1 11v10h5v-6h4v6h5V11L8 6zM10 3v1.970l7 5V11h2v2h-2v2h2v2h-2v4h6V3H10zm9 6h-2V7h2v2z"/></svg></div>
<span class="t" style="left:57.10px;top:456.00px;font-size:15.55px;color:#555;transform:scaleX(0.9618);">Colegios</span>
<div class="nav" style="top:488px"><svg viewBox="0 0 24 24" style="left:16px"><path d="M20 7h-5V4c0-1.100-.900-2-2-2h-2c-1.100 0-2 .900-2 2v3H4c-1.100 0-2 .900-2 2v11c0 1.100.900 2 2 2h16c1.100 0 2-.900 2-2V9c0-1.100-.900-2-2-2zm-9-3h2v5h-2V4zm0 12H9v2H7v-2H5v-2h2v-2h2v2h2v2zm2-1.500V13h6v1.500h-6zm0 3V16h4v1.500h-4z"/></svg></div>
<span class="t" style="left:56.72px;top:504.00px;font-size:15.55px;color:#555;transform:scaleX(0.8841);">Eps</span>
<div class="nav" style="top:536px"><svg viewBox="0 0 24 24" style="left:16px"><path d="M10.090 15.590L11.500 17l5-5-5-5-1.410 1.410L12.670 11H3v2h9.670l-2.580 2.590zM19 3H5c-1.110 0-2 .900-2 2v4h2V5h14v14H5v-4H3v4c0 1.100.890 2 2 2h14c1.100 0 2-.900 2-2V5c0-1.100-.900-2-2-2z"/></svg></div>
<span class="t" style="left:57.10px;top:552.00px;font-size:15.55px;color:#555;transform:scaleX(0.9421);">Cerrar sesión</span>
</div>

<!-- ================= ACCESSIBILITY BUTTON ================= -->
<div id="a11y"><svg class="abs" style="left:0;top:0" width="44" height="44" viewBox="0 0 44 44"><circle cx="22" cy="22" r="18.300" fill="none" stroke="#fff" stroke-width="1.400"/><circle cx="22" cy="13.600" r="3.100" fill="#fff"/><path d="M13.400 18.200c5.600 1.400 11.600 1.400 17.200 0l.5 2.300c-2.200.7-4.400 1.100-6.700 1.300v3.600l1.900 7.300h-2.600l-1.700-5.200-1.700 5.200h-2.600l1.900-7.300v-3.600c-2.300-.2-4.500-.6-6.700-1.300z" fill="#fff"/></svg></div>

<!-- ================= FOOTER ================= -->
<div id="foot">
<div class="abs" style="left:29px;top:12px;width:32px;height:32px;border-radius:3px;background:#6e6e6e"></div>
<span class="t" style="left:30.20px;top:19.00px;font-size:19.77px;font-weight:700;color:#f4f4f4;transform:scaleX(0.9120);">SIA</span>
<span class="t" style="left:83.00px;top:12.00px;font-size:14.39px;font-weight:700;color:#666;letter-spacing:1.30px;transform:scaleX(0.9072);">SISTEMA DE INFORMACION DE ADMISIONES REGISTRO Y CONTROL</span>
<span class="t" style="left:82.05px;top:29.00px;font-size:13.37px;color:#666;letter-spacing:0.90px;transform:scaleX(0.9519);">Universidad Francisco de Paula Santander Seccional Ocaña, Colombia</span>
<div class="abs" style="left:889px;top:10px;width:1px;height:39px;background:#a0a0a0;box-shadow:0 0 0 1px #f8f8f8"></div>
<svg class="abs" style="left:906px;top:13px" width="24" height="23" viewBox="0 0 24 23" fill="none" stroke="#8a8a8a" stroke-width="1"><rect x=".5" y=".5" width="23" height="17" rx="1.500"/><rect x="2.500" y="2.500" width="19" height="13"/><path d="M9 18v2.500h6V18M6 22h12" stroke-width="1.200"/></svg>
<span class="t" style="left:942.59px;top:11.00px;font-size:13.08px;color:#777;letter-spacing:0.60px;transform:scaleX(0.8099);">Desarrollado por</span>
<span class="t" style="left:942.40px;top:28.00px;font-size:13.52px;font-weight:700;color:#666;letter-spacing:0.80px;transform:scaleX(0.7970);">DIVISION DE SISTEMAS</span>
</div>

</body>
</html>
